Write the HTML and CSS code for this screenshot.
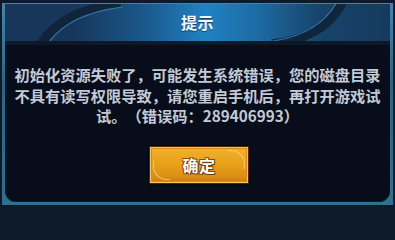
FILE: index.html
```html
<!DOCTYPE html>
<html lang="zh">
<head>
<meta charset="utf-8">
<link rel="stylesheet" href="styles.css">
</head>
<body>
<div class="frame">
  <div class="panel">
    <div class="header">
      <svg class="swoosh" viewBox="0 0 387 37" preserveAspectRatio="none" aria-hidden="true">
        <path d="M36 40 Q58 6 116 -1" fill="none" stroke="#10243b" stroke-width="9"/>
        <path d="M43 40 Q63 10 118 3" fill="none" stroke="#3f8fc4" stroke-width="1.2" opacity="0.8"/>
        <path d="M268 40 Q322 34 340 -3" fill="none" stroke="#10263d" stroke-width="9"/>
        <path d="M262 38 Q316 32 334 -3" fill="none" stroke="#3a87ba" stroke-width="1.2" opacity="0.7"/>
      </svg>
      <h1 class="title">提示</h1>
    </div>
    <div class="divider"></div>
    <p class="message">初始化资源失败了，可能发生系统错误，您的磁盘目录不具有读写权限导致，请您重启手机后，再打开游戏试试。（错误码：289406993）</p>
    <div class="actions">
      <button class="btn">确定</button>
    </div>
  </div>
</div>
</body>
</html>
```
FILE: styles.css
```css
html, body {
  margin: 0;
  padding: 0;
  background: #0c1a29;
}
body {
  width: 395px;
  height: 206px;
  overflow: hidden;
  font-family: "Noto Sans CJK SC", "Noto Sans", sans-serif;
}
.frame {
  box-sizing: border-box;
  margin: 3px 2px 0 2px;
  height: 202px;
  padding: 1px 3px 3px 3px;
  background: linear-gradient(180deg, #3f86ad 0%, #2b6585 40%, #2f7191 100%);
}
.panel {
  box-sizing: border-box;
  height: 198px;
  background: #070d1a;
  border-radius: 0 0 11px 11px;
  box-shadow: inset 0 -1px 0 #0d1a2a;
  display: flex;
  flex-direction: column;
  overflow: hidden;
}
.header {
  position: relative;
  box-sizing: border-box;
  height: 37px;
  padding-bottom: 2px;
  flex: none;
  display: flex;
  align-items: center;
  justify-content: center;
  background: linear-gradient(90deg, #17365a 0%, #17375a 18%, #1b5c91 38%, #2082c3 52%, #1d6aa2 66%, #17436a 82%, #163a5e 100%);
}
.swoosh {
  position: absolute;
  left: 0;
  top: 0;
  width: 100%;
  height: 100%;
}
.title {
  position: relative;
  margin: 0;
  font-size: 16px;
  font-weight: 700;
  color: #f4f8fc;
  line-height: 1;
  letter-spacing: 0.5px;
  text-shadow: 0 1px 1px rgba(0, 20, 50, 0.6);
}
.divider {
  height: 4px;
  flex: none;
  background: #0f1828;
}
.message {
  margin: 19px 0 0 0;
  padding: 0 9px;
  font-size: 15.25px;
  line-height: 20.5px;
  font-weight: 700;
  color: #c3cad5;
  text-align: center;
  text-spacing-trim: space-all;
}
.actions {
  display: flex;
  justify-content: center;
  margin-top: 20px;
}
.btn {
  position: relative;
  box-sizing: border-box;
  width: 100px;
  height: 38px;
  margin-left: 3px;
  padding: 0;
  border: 1px solid #4d2606;
  background: linear-gradient(180deg, #f1b12c 0%, #e9a21c 45%, #dc9014 80%, #c97a0d 100%);
  box-shadow: inset 0 0 0 1px #f8c654, inset 0 0 0 2px #d98b12, 0 0 2px #000;
  color: #ffffff;
  font-family: "Noto Sans CJK SC", sans-serif;
  font-size: 16px;
  font-weight: 700;
  letter-spacing: 0.5px;
  text-shadow: 1px 1px 0 #6b3a08, -1px -1px 0 #8a4a0a, 1px -1px 0 #8a4a0a, -1px 1px 0 #8a4a0a;
}
.btn::before,
.btn::after {
  content: "";
  position: absolute;
  width: 16px;
  height: 18px;
  border: 1px solid #fbd37a;
}
.btn::before {
  top: 3px;
  right: 3px;
  border-left: none;
  border-bottom: none;
  border-radius: 0 14px 0 0;
  opacity: 0.8;
}
.btn::after {
  bottom: 3px;
  left: 3px;
  border-right: none;
  border-top: none;
  border-radius: 0 0 0 14px;
  opacity: 0.8;
}
```
